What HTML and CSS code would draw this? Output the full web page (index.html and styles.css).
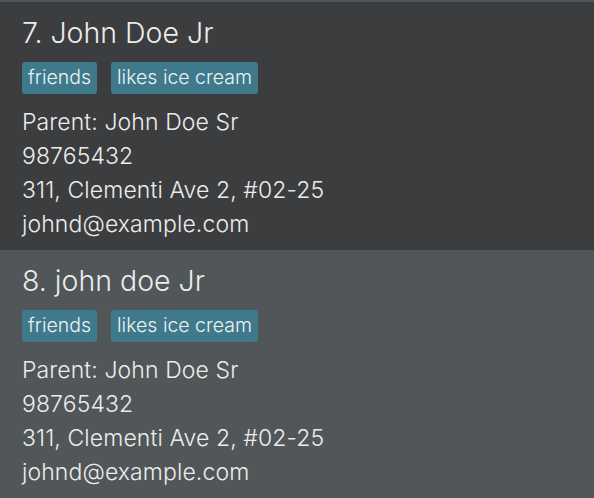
FILE: index.html
```html
<!DOCTYPE html>
<html>
<head>
<meta charset="utf-8">
<link rel="stylesheet" href="styles.css">
</head>
<body>
<div class="list">
  <div class="card odd">
    <div class="name">7. John Doe Jr</div>
    <div class="tags">
      <span class="tag">friends</span>
      <span class="tag">likes ice cream</span>
    </div>
    <div class="details">
      <div class="line">Parent: John Doe Sr</div>
      <div class="line">98765432</div>
      <div class="line">311, Clementi Ave 2, #02-25</div>
      <div class="line">johnd@example.com</div>
    </div>
  </div>
  <div class="card even">
    <div class="name">8. john doe Jr</div>
    <div class="tags">
      <span class="tag">friends</span>
      <span class="tag">likes ice cream</span>
    </div>
    <div class="details">
      <div class="line">Parent: John Doe Sr</div>
      <div class="line">98765432</div>
      <div class="line">311, Clementi Ave 2, #02-25</div>
      <div class="line">johnd@example.com</div>
    </div>
  </div>
</div>
</body>
</html>
```
FILE: styles.css
```css
html, body {
  margin: 0;
  padding: 0;
  background: #515658;
}
body {
  width: 594px;
  height: 498px;
  overflow: hidden;
  font-family: Inter, "Noto Sans", sans-serif;
  font-weight: 350;
  color: #ececec;
}
.list {
  padding-top: 2px;
  background: #515658;
}
.card {
  height: 248px;
  box-sizing: border-box;
  padding: 13px 0 0 22px;
  display: flex;
  flex-direction: column;
}
.card.odd { background: #3c3d3f; }
.card.even { background: #515658; }
.name {
  font-size: 28.5px;
  line-height: 36px;
  white-space: nowrap;
}
.tags {
  display: flex;
  gap: 14px;
  margin-top: 11px;
}
.tag {
  background: #3f7a8c;
  border-radius: 3px;
  font-size: 19.5px;
  line-height: 23.5px;
  padding: 4px 6px;
  color: #eef2f3;
}
.details {
  margin-top: 11px;
  display: flex;
  flex-direction: column;
}
.line {
  font-size: 23px;
  line-height: 34px;
  letter-spacing: 0.1px;
  white-space: nowrap;
}
```
